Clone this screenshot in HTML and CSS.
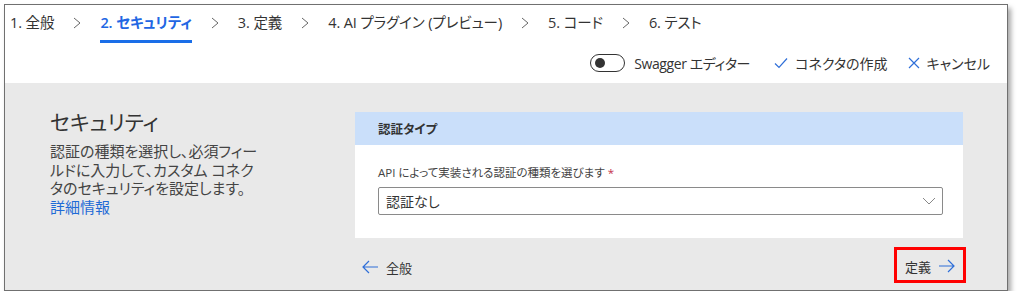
FILE: index.html
```html
<!DOCTYPE html>
<html lang="ja">
<head>
    <meta charset="UTF-8">
    <title>カスタム コネクタ - セキュリティ</title>
    <link rel="stylesheet" href="styles.css">
</head>
<body>
    <div class="frame">
        <div class="top">
            <div class="tabs">
                <span class="tab">1. 全般</span>
                <svg class="sep" width="8" height="12" viewBox="0 0 8 12"><path d="M1 1l6 5-6 5" fill="none" stroke="#666" stroke-width="1"/></svg>
                <span class="tab active">2. セキュリティ</span>
                <svg class="sep" width="8" height="12" viewBox="0 0 8 12"><path d="M1 1l6 5-6 5" fill="none" stroke="#666" stroke-width="1"/></svg>
                <span class="tab">3. 定義</span>
                <svg class="sep" width="8" height="12" viewBox="0 0 8 12"><path d="M1 1l6 5-6 5" fill="none" stroke="#666" stroke-width="1"/></svg>
                <span class="tab">4. AI プラグイン (プレビュー)</span>
                <svg class="sep" width="8" height="12" viewBox="0 0 8 12"><path d="M1 1l6 5-6 5" fill="none" stroke="#666" stroke-width="1"/></svg>
                <span class="tab">5. コード</span>
                <svg class="sep" width="8" height="12" viewBox="0 0 8 12"><path d="M1 1l6 5-6 5" fill="none" stroke="#666" stroke-width="1"/></svg>
                <span class="tab">6. テスト</span>
            </div>
            <div class="toolbar">
                <span class="toggle"><span class="knob"></span></span>
                <span class="tool-label">Swagger エディター</span>
                <span class="tool">
                    <svg width="14" height="12" viewBox="0 0 14 12"><path d="M1 6.5l4 4 8-9" fill="none" stroke="#2f6fd8" stroke-width="1.2"/></svg>
                    コネクタの作成
                </span>
                <span class="tool">
                    <svg width="12" height="12" viewBox="0 0 12 12"><path d="M1 1l10 10M11 1L1 11" fill="none" stroke="#2f6fd8" stroke-width="1.2"/></svg>
                    キャンセル
                </span>
            </div>
        </div>

        <div class="content">
            <div class="intro">
                <h2>セキュリティ</h2>
                <p>認証の種類を選択し、必須フィー<br>ルドに入力して、カスタム コネク<br>タのセキュリティを設定します。</p>
                <a href="#">詳細情報</a>
            </div>

            <div class="form-col">
                <div class="card">
                    <div class="card-head">認証タイプ</div>
                    <div class="card-body">
                        <label>API によって実装される認証の種類を選びます <span class="req">*</span></label>
                        <div class="select">
                            <span>認証なし</span>
                            <svg width="14" height="8" viewBox="0 0 14 8"><path d="M1 1l6 6 6-6" fill="none" stroke="#888" stroke-width="1"/></svg>
                        </div>
                    </div>
                </div>
                <div class="footer">
                    <span class="nav-btn">
                        <svg width="16" height="14" viewBox="0 0 16 14"><path d="M7 1L1 7l6 6M1 7h15" fill="none" stroke="#2f6fd8" stroke-width="1.2"/></svg>
                        全般
                    </span>
                    <span class="nav-btn next">
                        定義
                        <svg width="16" height="14" viewBox="0 0 16 14"><path d="M9 1l6 6-6 6M15 7H0" fill="none" stroke="#2f6fd8" stroke-width="1.2"/></svg>
                    </span>
                </div>
            </div>
        </div>
    </div>
</body>
</html>
```

FILE: styles.css
```css
body {
    margin: 0;
    background-color: #fff;
    font-family: "Open Sans", "Noto Sans CJK JP", sans-serif;
    font-feature-settings: "palt";
    color: #333;
}

.frame {
    margin: 4px 0 0 4px;
    width: 1002px;
    height: 285px;
    border: 1px solid #707070;
    box-shadow: 3px 4px 5px rgba(0, 0, 0, 0.35);
    display: flex;
    flex-direction: column;
}

/* top wizard bar */
.top {
    background-color: #fff;
    height: 78px;
}

.tabs {
    display: flex;
    align-items: flex-start;
    gap: 19px;
    padding-left: 5px;
    font-size: 14.5px;
}

.tab {
    padding-top: 8px;
    line-height: 20px;
    padding-bottom: 7px;
    border-bottom: 3px solid transparent;
    white-space: nowrap;
    letter-spacing: -0.1px;
}

.tab.active {
    color: #2266e3;
    font-weight: 600;
    border-bottom-color: #1a6ee8;
}

.sep {
    margin-top: 12px;
}

.toolbar {
    display: flex;
    justify-content: flex-end;
    align-items: center;
    height: 40px;
    padding-right: 17px;
    font-size: 14px;
}

.toggle {
    width: 29px;
    height: 16px;
    border: 1px solid #333;
    border-radius: 9px;
    display: flex;
    align-items: center;
    padding-left: 4px;
    box-sizing: content-box;
    margin-right: 9px;
}

.toggle .knob {
    width: 10px;
    height: 10px;
    border-radius: 50%;
    background-color: #333;
}

.tool-label {
    margin-right: 24px;
    letter-spacing: -0.4px;
}

.tool {
    display: flex;
    align-items: center;
    gap: 7px;
    margin-right: 20px;
}

.tool:last-child {
    margin-right: 0;
}

/* main area */
.content {
    flex: 1;
    background-color: #e9e9e9;
    display: flex;
    padding-left: 45px;
}

.intro {
    width: 305px;
    padding-top: 25px;
}

.intro h2 {
    margin: 0;
    font-size: 21px;
    line-height: 28px;
    font-weight: 400;
    color: #333;
}

.intro p {
    margin: 6px 0 0;
    font-size: 15px;
    line-height: 18.5px;
    color: #444;
}

.intro a {
    display: block;
    font-size: 15px;
    line-height: 19px;
    color: #1f6bd6;
    text-decoration: none;
}

.form-col {
    width: 608px;
    padding-top: 29px;
}

.card {
    background-color: #fff;
}

.card-head {
    background-color: #cadffa;
    height: 33px;
    display: flex;
    align-items: center;
    padding-left: 23px;
    font-size: 12.5px;
    font-weight: 700;
    color: #333;
}

.card-body {
    padding: 20px 20px 23px 23px;
}

.card-body label {
    display: block;
    font-size: 11.5px;
    line-height: 16px;
    color: #444;
    margin-bottom: 6px;
}

.req {
    color: #c4314b;
}

.select {
    height: 26px;
    border: 1px solid #8a8a8a;
    border-radius: 2px;
    display: flex;
    align-items: center;
    justify-content: space-between;
    padding: 0 6px 0 7px;
    font-size: 14px;
    color: #333;
}

.footer {
    display: flex;
    justify-content: space-between;
    align-items: center;
    margin-top: 10px;
    margin-right: -3px;
    padding-left: 7px;
    height: 33px;
}

.nav-btn {
    display: flex;
    align-items: center;
    gap: 8px;
    font-size: 13px;
    padding-top: 5px;
}

.nav-btn.next {
    height: 27px;
    padding: 3px 8px 0 8px;
    border: 3px solid #f00;
}
```
